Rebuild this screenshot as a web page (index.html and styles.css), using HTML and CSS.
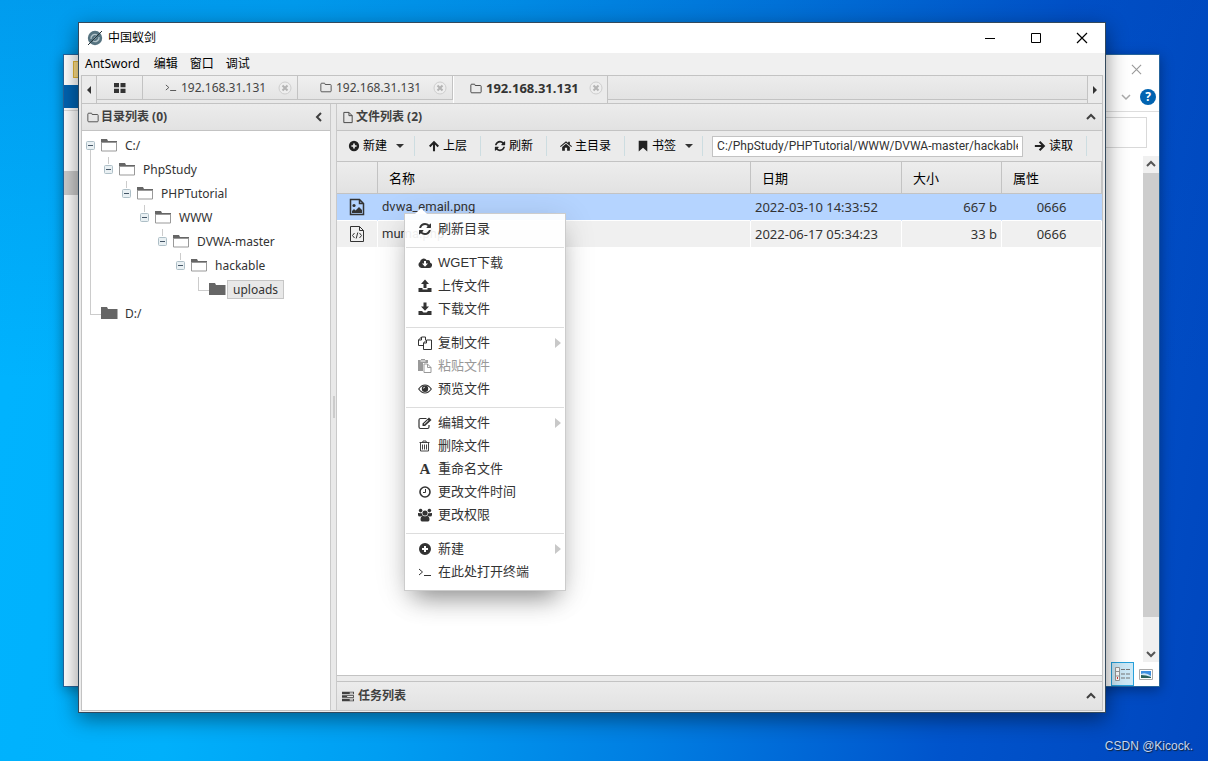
FILE: index.html
```html
<!DOCTYPE html>
<html lang="zh-CN">
<head>
<meta charset="utf-8">
<title>中国蚁剑</title>
<link rel="stylesheet" href="styles.css">
</head>
<body>
<svg class="defs" aria-hidden="true">
  <symbol id="refresh" viewBox="0 0 1792 1792"><path d="M1639 1056q0 5-1 7-64 268-268 434.500t-478 166.500q-146 0-282.500-55t-243.500-157l-129 129q-19 19-45 19t-45-19-19-45v-448q0-26 19-45t45-19h448q26 0 45 19t19 45-19 45l-137 137q71 66 161 102t187 36q134 0 250-65t186-179q11-17 53-117 8-23 30-23h192q13 0 22.500 9.500t9.500 22.500zm25-800v448q0 26-19 45t-45 19h-448q-26 0-45-19t-19-45 19-45l138-138q-148-137-349-137-134 0-250 65t-186 179q-11 17-53 117-8 23-30 23h-199q-13 0-22.500-9.500t-9.500-22.500v-7q65-268 270-434.500t480-166.500q146 0 284 55.500t245 156.500l130-129q19-19 45-19t45 19 19 45z"/></symbol>
  <symbol id="plus" viewBox="0 0 14 14"><path fill-rule="evenodd" d="M7 1a6 6 0 1 0 0 12A6 6 0 0 0 7 1zM6 4h2v2h2v2H8v2H6V8H4V6h2z"/></symbol>
  <symbol id="up" viewBox="0 0 14 14"><path d="M7 13V3M2 7.500 7 2.500l5 5" fill="none" stroke="currentColor" stroke-width="2.400"/></symbol>
  <symbol id="right" viewBox="0 0 14 14"><path d="M1 7h10M6.500 2l5 5-5 5" fill="none" stroke="currentColor" stroke-width="2.400"/></symbol>
  <symbol id="home" viewBox="0 0 14 14"><path d="M7 4.500 11.500 8.200V12.500H8.300V9H5.700v3.500H2.500V8.200zM7 1.500l2.500 2V2h2v3.200L14 7.300l-.8.900L7 3.100.8 8.200 0 7.300z"/></symbol>
  <symbol id="bookmark" viewBox="0 0 14 14"><path d="M2 1h10v12.500L7 9l-5 4.500z"/></symbol>
  <symbol id="folder" viewBox="0 0 14 12"><path d="M1 2q0-1 1-1h3q1 0 1 1.500h6q1 0 1 1V10q0 1-1 1H2q-1 0-1-1z" fill="none" stroke="currentColor"/></symbol>
  <symbol id="file" viewBox="0 0 12 14"><path d="M1.500 1.500h5.500l3.500 3.500v7.500h-9zM7 1.500V5h3.500" fill="none" stroke="currentColor"/></symbol>
  <symbol id="term" viewBox="0 0 14 12"><path d="M1 3l3.500 3L1 9M6 9.500h7" fill="none" stroke="currentColor"/></symbol>
  <symbol id="tasks" viewBox="0 0 14 12"><path fill-rule="evenodd" d="M0 .5h14v3H0zM0 4.500h14v3H0zm6 .8v1.400h7V5.300zM0 8.500h14v3H0zm9 .8v1.400h4V9.300zM9 1.300v1.400h4V1.300z"/></symbol>
  <symbol id="cloud" viewBox="0 0 14 14"><path fill-rule="evenodd" d="M3.500 12A3.200 3.200 0 0 1 2 6.100 3.700 3.700 0 0 1 8.800 4.200 2.200 2.200 0 0 1 12 6.500 2.800 2.800 0 0 1 11.300 12zM6 5v2.500H4l3 3.200 3-3.200H8V5z"/></symbol>
  <symbol id="upload" viewBox="0 0 14 14"><path d="M7 .5 11 5H8.500v4h-3V5H3zM.5 9h4v1.500h5V9h4v4H.5z"/></symbol>
  <symbol id="download" viewBox="0 0 14 14"><path d="M7 8.800 3 4.500h2.500V.5h3v4H11zM.5 9H4l1.500 1.500h3L10 9h3.500v4H.5z"/></symbol>
  <symbol id="copy" viewBox="0 0 14 14"><path d="M5.500 9.500h-5V4l3-3h4v3M3.500 1v3h-3M5.500 13.500V7l3-3h5v9.500zM8.500 4v3h-3" fill="none" stroke="currentColor"/></symbol>
  <symbol id="paste" viewBox="0 0 14 14"><path fill-rule="evenodd" d="M0 1h3V0h4v1h3v3H5v8H0zM2.500 1.500v1h5v-1z"/><path d="M6 5h3.500L13 8.500v5H6zM9.500 5v3.500H13" fill="none" stroke="currentColor"/></symbol>
  <symbol id="eye" viewBox="0 0 14 14"><path d="M.7 7Q3.500 3 7 3t6.300 4Q10.500 11 7 11T.7 7z" fill="none" stroke="currentColor" stroke-width="1.200"/><path fill-rule="evenodd" d="M7 3.500a3.200 3.200 0 1 0 0 6.400 3.200 3.200 0 0 0 0-6.400zM5 6.500A2 2 0 0 1 7 4.700v.8q-1 0-1.200 1z"/></symbol>
  <symbol id="edit" viewBox="0 0 14 14"><path d="M8.500 2.500H2.500q-1.500 0-1.500 1.500v7q0 1.500 1.500 1.500h7q1.500 0 1.500-1.500V9" fill="none" stroke="currentColor" stroke-width="1.200"/><path fill-rule="evenodd" d="M4.500 10V7.500l6.500-6L13.500 4 7 10zM6 7.800v1l4.500-4.300-.6-.6z"/></symbol>
  <symbol id="trash" viewBox="0 0 14 14"><path d="M1.500 3.500h10M4.500 3.500l.5-1.500h3l.5 1.500M2.500 3.500v8.500h8V3.500M4.500 5.500v5M6.500 5.500v5M8.500 5.500v5" fill="none" stroke="currentColor" stroke-width=".9"/></symbol>
  <symbol id="clock" viewBox="0 0 14 14"><path d="M12 7A5 5 0 1 1 2 7a5 5 0 0 1 10 0z" fill="none" stroke="currentColor" stroke-width="1.600"/><path d="M7.500 4v3.500H5" fill="none" stroke="currentColor"/></symbol>
  <symbol id="users" viewBox="0 0 14 14"><circle cx="7" cy="5" r="2.600"/><circle cx="2.600" cy="2.600" r="1.800"/><circle cx="11.400" cy="2.600" r="1.800"/><path d="M0 5q2 0 3.800.2Q4 7 5 7.500 3 8.500 2 8.500 0 8.500 0 7zM14 5q-2 0-3.800.2Q10 7 9 7.500q2 1 3 1 2 0 2-1.500zM5 7.800q2 1 4 0 2.500.4 2.500 3.800 0 1.900-1.500 1.900H4q-1.500 0-1.500-1.900Q2.500 8.200 5 7.800z"/></symbol>
  <symbol id="grid" viewBox="0 0 12 10"><path d="M0 0h5v4.300H0zM6.500 0h5v4.300h-5zM0 5.700h5V10H0zM6.500 5.700h5V10h-5z"/></symbol>
  <symbol id="closetab" viewBox="0 0 14 14"><circle cx="7" cy="7" r="6" fill="#eee" stroke="#cecece"/><path d="M4.500 4.500l5 5M9.500 4.500l-5 5" stroke="#b4b4b4" stroke-width="2"/></symbol>
  <symbol id="chevup" viewBox="0 0 10 8"><path d="M1 6l4-4 4 4" fill="none" stroke="currentColor" stroke-width="2"/></symbol>
  <symbol id="cross" viewBox="0 0 12 12"><path d="M1 1l10 10M11 1L1 11" fill="none" stroke="currentColor" stroke-width="1.200"/></symbol>
  <symbol id="open" viewBox="0 0 17 14"><path d="M0 1h6l1 2h9v2H0z" fill="#666"/><path d="M.5 4.500h15v8.500H.5z" fill="#fff" stroke="#999"/><path d="M1 3.500h15" stroke="#666"/></symbol>
  <symbol id="closed" viewBox="0 0 17 14"><path d="M0 1h6l1 2h9.500v10H0z" fill="#666"/></symbol>
  <symbol id="minus" viewBox="0 0 9 9"><rect x=".5" y=".5" width="8" height="8" rx="1" fill="#e9f0f3" stroke="#aebfc7"/><path d="M2 4.500h5" stroke="#456"/></symbol>
</svg>

<section class="explorer" aria-label="资源管理器">
  <div class="ex-left"><i class="ex-folder"></i><i class="ex-file"></i><i class="ex-line"></i><i class="ex-nav"></i></div>
  <div class="ex-right">
    <div class="ex-title"><button class="plain" aria-label="关闭窗口"><svg width="11" height="11"><use href="#cross"/></svg></button></div>
    <div class="ex-help">
      <svg width="10" height="8" viewBox="0 0 10 8"><path d="M1 2l4 4 4-4" fill="none" stroke="#aaa" stroke-width="1.500"/></svg>
      <button class="help" aria-label="帮助">?</button>
    </div>
    <div class="ex-search"><div class="ex-box"></div></div>
    <div class="ex-scroll">
      <svg width="16" height="17" viewBox="0 0 16 17"><path d="M4 10l4-4 4 4" fill="none" stroke="#555" stroke-width="2"/></svg>
      <i class="thumb"></i>
      <svg width="16" height="17" viewBox="0 0 16 17"><path d="M4 7l4 4 4-4" fill="none" stroke="#555" stroke-width="2"/></svg>
    </div>
    <div class="ex-status">
      <button class="view on" aria-label="详细信息"><svg width="18" height="14" viewBox="0 0 18 14"><path d="M1.500.5h4v13h-4zM1.500 4.500h4M1.500 9h4" fill="#fff" stroke="#999"/><path d="M3 11h1" stroke="#d33" stroke-width="2"/><path d="M7 2.500h4M12 2.500h4M7 7h4M12 7h4M7 11h4M12 11h4" stroke="#777"/></svg></button>
      <button class="view" aria-label="缩略图"><svg width="14" height="11" viewBox="0 0 14 11"><path d="M.5.5h13v10H.5z" fill="#fff" stroke="#aaa"/><path d="M2 2h10v7H2z" fill="#3d8fe0"/><path d="M2 5q5-2 10 2v2H2z" fill="#cfe6f6"/><path d="M2 6q5 0 10 2v1H2z" fill="#28605a"/></svg></button>
    </div>
  </div>
</section>

<main class="window">
  <header class="titlebar">
    <svg class="logo" viewBox="0 0 16 16"><circle cx="8" cy="8" r="7.200" fill="#567380"/><path d="M4 9a4 4 0 0 1 6-4M12 7a4 4 0 0 1-6 4M7 9l2-2" fill="none" stroke="#b4c4ca" stroke-width="1.300"/><path d="M1 15L15 1" stroke="#26343b"/></svg>
    <h1>中国蚁剑</h1>
    <button class="plain wbtn" aria-label="最小化"><svg width="12" height="12"><path d="M1 6.500h10" stroke="#000"/></svg></button>
    <button class="plain wbtn" aria-label="最大化"><svg width="12" height="12"><path d="M1.500 1.500h9v9h-9z" fill="none" stroke="#000"/></svg></button>
    <button class="plain wbtn" aria-label="关闭"><svg width="12" height="12"><use href="#cross"/></svg></button>
  </header>
  <nav class="menubar"><button class="plain">AntSword</button><button class="plain">编辑</button><button class="plain">窗口</button><button class="plain">调试</button></nav>

  <div class="client">
    <div class="tabs">
      <button class="arrow" aria-label="向左"><svg width="4" height="8"><path d="M4 0v8L0 4z"/></svg></button>
      <div class="tab first"><button class="plain" aria-label="主页"><svg width="12" height="10"><use href="#grid"/></svg></button></div>
      <div class="tab"><button class="plain"><svg width="12" height="11"><use href="#term"/></svg>192.168.31.131</button><button class="plain x" aria-label="关闭标签"><svg width="14" height="14"><use href="#closetab"/></svg></button></div>
      <div class="tab"><button class="plain"><svg width="12" height="11"><use href="#folder"/></svg>192.168.31.131</button><button class="plain x" aria-label="关闭标签"><svg width="14" height="14"><use href="#closetab"/></svg></button></div>
      <div class="tab active"><button class="plain"><svg width="12" height="11"><use href="#folder"/></svg>192.168.31.131</button><button class="plain x" aria-label="关闭标签"><svg width="14" height="14"><use href="#closetab"/></svg></button></div>
      <div class="tabfill"></div>
      <button class="arrow end" aria-label="向右"><svg width="4" height="8"><path d="M0 0v8l4-4z"/></svg></button>
    </div>

    <div class="panes">
      <aside class="left">
        <h2 class="head"><svg width="12" height="11"><use href="#folder"/></svg><span>目录列表 (0)</span><button class="plain" aria-label="折叠"><svg width="8" height="10" viewBox="0 0 8 10"><path d="M6 1L2 5l4 4" fill="none" stroke="currentColor" stroke-width="2"/></svg></button></h2>
        <ul class="tree">
          <li class="root"><div class="node"><svg class="tg"><use href="#minus"/></svg><svg class="fo"><use href="#open"/></svg><span>C:/</span></div>
            <ul><li><div class="node"><svg class="tg"><use href="#minus"/></svg><svg class="fo"><use href="#open"/></svg><span>PhpStudy</span></div>
              <ul><li><div class="node"><svg class="tg"><use href="#minus"/></svg><svg class="fo"><use href="#open"/></svg><span>PHPTutorial</span></div>
                <ul><li><div class="node"><svg class="tg"><use href="#minus"/></svg><svg class="fo"><use href="#open"/></svg><span>WWW</span></div>
                  <ul><li><div class="node"><svg class="tg"><use href="#minus"/></svg><svg class="fo"><use href="#open"/></svg><span>DVWA-master</span></div>
                    <ul><li><div class="node"><svg class="tg"><use href="#minus"/></svg><svg class="fo"><use href="#open"/></svg><span>hackable</span></div>
                      <ul><li class="leaf"><div class="node"><i class="tg"></i><svg class="fo"><use href="#closed"/></svg><span class="sel">uploads</span></div></li></ul>
                    </li></ul>
                  </li></ul>
                </li></ul>
              </li></ul>
            </li></ul>
          </li>
          <li class="leaf"><div class="node"><i class="tg"></i><svg class="fo"><use href="#closed"/></svg><span>D:/</span></div></li>
        </ul>
      </aside>
      <div class="split"></div>
      <section class="right">
        <div class="files">
          <h2 class="head"><svg width="12" height="13"><use href="#file"/></svg><span>文件列表 (2)</span><button class="plain" aria-label="折叠"><svg width="10" height="8"><use href="#chevup"/></svg></button></h2>
          <div class="toolbar">
            <button class="tool"><svg><use href="#plus"/></svg>新建<i class="caret"></i></button>
            <button class="tool"><svg><use href="#up"/></svg>上层</button>
            <button class="tool"><svg><use href="#refresh"/></svg>刷新</button>
            <button class="tool"><svg><use href="#home"/></svg>主目录</button>
            <button class="tool"><svg><use href="#bookmark"/></svg>书签<i class="caret"></i></button>
            <input class="path" type="text" aria-label="路径" value="C:/PhpStudy/PHPTutorial/WWW/DVWA-master/hackable/uploads/">
            <button class="tool"><svg><use href="#right"/></svg>读取</button>
          </div>
          <table class="grid">
            <colgroup><col class="c1"><col><col class="c3"><col class="c4"><col class="c5"></colgroup>
            <thead><tr><th></th><th>名称</th><th>日期</th><th>大小</th><th>属性</th></tr></thead>
            <tbody>
              <tr class="picked"><td><svg width="16" height="18" viewBox="0 0 16 18"><path d="M1.500 1.500h9l4 4v11h-13zM10.500 1.500v4h4" fill="none" stroke="currentColor" stroke-width="1.500"/><circle cx="5" cy="7.500" r="1.600"/><path d="M3 15v-2l2-2 1.500 1.500L10 9l3 3v3z"/></svg></td><td class="name">dvwa_email.png</td><td>2022-03-10 14:33:52</td><td>667 b</td><td>0666</td></tr>
              <tr><td><svg width="16" height="18" viewBox="0 0 16 18"><path d="M1.500 1.500h9l4 4v11h-13zM10.500 1.500v4h4M5.500 8L3.500 10.500l2 2.500M10.500 8l2 2.500-2 2.500M8.800 7.500l-1.600 6" fill="none" stroke="currentColor"/></svg></td><td class="name">muma.php</td><td>2022-06-17 05:34:23</td><td>33 b</td><td>0666</td></tr>
            </tbody>
          </table>
        </div>
        <h2 class="head tasks"><svg width="12" height="11"><use href="#tasks"/></svg><span>任务列表</span><button class="plain" aria-label="展开"><svg width="10" height="8"><use href="#chevup"/></svg></button></h2>
      </section>
    </div>
  </div>
</main>

<div class="menu" role="menu">
  <button role="menuitem"><svg><use href="#refresh"/></svg>刷新目录</button>
  <hr>
  <button role="menuitem"><svg><use href="#cloud"/></svg>WGET下载</button>
  <button role="menuitem"><svg><use href="#upload"/></svg>上传文件</button>
  <button role="menuitem"><svg><use href="#download"/></svg>下载文件</button>
  <hr>
  <button role="menuitem" class="sub"><svg><use href="#copy"/></svg>复制文件</button>
  <button role="menuitem" disabled><svg><use href="#paste"/></svg>粘贴文件</button>
  <button role="menuitem"><svg><use href="#eye"/></svg>预览文件</button>
  <hr>
  <button role="menuitem" class="sub"><svg><use href="#edit"/></svg>编辑文件</button>
  <button role="menuitem"><svg><use href="#trash"/></svg>删除文件</button>
  <button role="menuitem"><b class="letter">A</b>重命名文件</button>
  <button role="menuitem"><svg><use href="#clock"/></svg>更改文件时间</button>
  <button role="menuitem"><svg><use href="#users"/></svg>更改权限</button>
  <hr>
  <button role="menuitem" class="sub"><svg><use href="#plus"/></svg>新建</button>
  <button role="menuitem"><svg><use href="#term"/></svg>在此处打开终端</button>
</div>
<div class="credit">CSDN @Kicock.</div>
</body>
</html>
```
FILE: styles.css
```css
* { box-sizing: border-box; }
html, body { height: 100%; }
body {
  margin: 0;
  position: relative;
  overflow: hidden;
  font: 12px/16px "Noto Sans", "Noto Sans CJK SC", sans-serif;
  color: #333;
  background:
    linear-gradient(to bottom, rgba(0, 60, 170, .2), rgba(0, 60, 170, 0) 50%),
    linear-gradient(100deg, #00b4ff 0%, #00b0fb 22%, #009ef2 38%, #007ee2 58%, #0054cc 80%, #0046be 100%);
}
.defs { position: absolute; width: 0; height: 0; }
svg { display: block; flex: none; fill: currentColor; }
ul { list-style: none; margin: 0; padding: 0; }
button { font: inherit; color: inherit; cursor: default; }
.plain { display: flex; align-items: center; border: 0; padding: 0; background: none; }

/* Explorer window behind */
.explorer {
  position: absolute;
  inset: 54px 48px 74px 63px;
  display: flex;
  justify-content: space-between;
  background: #fff;
  border: 1px solid #26649c;
  box-shadow: 0 3px 12px rgba(0, 0, 0, .35);
}
.ex-left { width: 15px; display: flex; flex-direction: column; align-items: flex-end; }
.ex-folder { width: 6px; height: 17px; margin: 6px 0 7px; background: #ffe08a; border: 1px solid #e5b93a; }
.ex-file { width: 15px; height: 23px; background: #0063b1; }
.ex-line { width: 15px; height: 61px; margin-top: 2px; border-top: 1px solid #ddd; }
.ex-nav { width: 15px; height: 24px; background: #ccc; }
.ex-right { width: 55px; display: flex; flex-direction: column; }
.ex-title { height: 28px; display: flex; align-items: center; justify-content: flex-end; padding-right: 17px; color: #999; }
.ex-help { height: 29px; display: flex; align-items: center; justify-content: flex-end; gap: 9px; padding-right: 3px; border-bottom: 1px solid #ddd; }
.help { width: 16px; height: 16px; padding: 0; border: 0; border-radius: 50%; background: #0063b1; color: #fff; font-weight: bold; line-height: 16px; }
.ex-search { height: 44px; padding: 5px 12px 8px 0; }
.ex-box { height: 31px; border: 1px solid #d9d9d9; }
.ex-scroll { flex: 1; width: 16px; align-self: flex-end; display: flex; flex-direction: column; background: #f0f0f0; }
.thumb { flex: 1; background: #cdcdcd; margin-bottom: 28px; }
.ex-status { height: 24px; display: flex; align-items: stretch; padding-left: 7px; }
.view { width: 23px; padding: 0; border: 1px solid transparent; background: none; display: flex; align-items: center; justify-content: center; }
.view.on { background: #cce8f6; border-color: #26a0da; }

/* Main window */
.window {
  position: absolute;
  inset: 22px 102px 48px 78px;
  display: flex;
  flex-direction: column;
  background: #ececec;
  border: 1px solid #33495c;
  box-shadow: 0 6px 20px rgba(0, 0, 0, .45);
}
.titlebar { height: 30px; display: flex; align-items: center; background: #fff; color: #000; padding-left: 8px; }
.logo { width: 16px; height: 16px; margin-right: 5px; }
h1 { margin: 0; flex: 1; font-size: 12px; font-weight: 400; }
.wbtn { width: 46px; height: 30px; justify-content: center; }
.menubar { height: 22px; display: flex; gap: 12px; padding-left: 6px; background: #f0f0f0; color: #000; }
.menubar .plain:first-child { margin-right: 2px; }
.client { flex: 1; min-height: 0; margin: 0 2px 1px; display: flex; flex-direction: column; border: 1px solid #c3c3c3; }

.tabs { height: 28px; display: flex; align-items: flex-start; border-bottom: 1px solid #c3c3c3; background: #e9e9e9; }
.arrow { width: 15px; height: 27px; padding: 0; border: 0; border-right: 1px solid #c3c3c3; background: #ebebeb; display: flex; align-items: center; justify-content: center; }
.arrow.end { border-right: 0; border-left: 1px solid #c3c3c3; }
.tab { width: 155px; height: 24px; padding: 0 5px 0 22px; display: flex; align-items: center; justify-content: space-between; border-right: 1px solid #c3c3c3; border-bottom: 1px solid #c3c3c3; background: linear-gradient(#f0f0f0, #e4e4e4); color: #444; }
.tab .plain { gap: 4px; }
.tab.first { width: 46px; padding: 0; justify-content: center; color: #333; }
.tab.active { height: 27px; padding: 0 4px 3px 16px; border-bottom: 0; background: #ebebeb; font-size: 13px; font-weight: bold; color: #333; border-left: 1px solid #fff; }
.tabfill { flex: 1; height: 24px; border-bottom: 1px solid #c3c3c3; background: linear-gradient(#ececec, #e3e3e3); }

.panes { flex: 1; min-height: 0; display: flex; }
.left { width: 248px; display: flex; flex-direction: column; background: #fff; }
.split { width: 7px; background: #e9e9e9 linear-gradient(#ccc, #ccc) center / 2px 22px no-repeat; border: 1px solid #c9c9c9; border-width: 0 1px; }
.right { flex: 1; min-width: 0; display: flex; flex-direction: column; gap: 5px; background: #ebebeb; }
.files { flex: 1; min-height: 0; background: #fff; border-bottom: 1px solid #c3c3c3; }
.head { height: 27px; margin: 0; padding: 0 6px 0 5px; display: flex; align-items: center; gap: 2px; font-size: 12px; font-weight: bold; background: linear-gradient(#ececec, #e2e2e2); border-bottom: 1px solid #c3c3c3; color: #404040; }
.left .head { padding-right: 7px; }
.head span { flex: 1; }
.tasks { height: 29px; border-top: 1px solid #c3c3c3; border-bottom: 0; gap: 4px; }

.tree { padding: 2px 4px; color: #333; }
.tree li { position: relative; }
.tree ul { margin-left: 18px; }
.node { height: 24px; display: flex; align-items: center; }
.tg { width: 9px; height: 9px; margin-right: 6px; }
.fo { width: 17px; height: 14px; margin-right: 1px; }
.node span { padding: 0 5px; border: 1px solid transparent; line-height: 17px; }
.node .sel { background: #e8e8e8; border-color: #c6c6c6; }
.tree li::before { content: ""; position: absolute; left: 4px; top: 0; width: 1px; height: 7px; background: #ccc; }
.tree .root::before { top: 17px; height: auto; bottom: 0; }
.tree .leaf::before { width: 10px; height: 13px; background: none; border: 1px solid #ccc; border-width: 0 0 1px 1px; }

.toolbar { height: 31px; display: flex; align-items: center; background: #ebebeb; border-bottom: 1px solid #c3c3c3; color: #000; }
.tool { height: 20px; display: flex; align-items: center; gap: 3px; padding: 0 13px; border: 0; border-right: 1px solid #cddde1; background: none; white-space: nowrap; }
.tool:first-child { padding: 0 10px 0 11px; }
.tool:nth-child(5) { padding: 0 9px 0 12px; }
.tool svg { width: 12px; height: 12px; color: #222; }
.caret { margin-left: 6px; border: 4px solid transparent; border-top-color: #333; border-bottom: 0; }
.path { flex: 1; min-width: 0; height: 21px; margin-left: 9px; margin-right: -2px; padding: 0 4px; border: 1px solid #c3c3c3; background: #fff; font: 12px/16px Roboto, sans-serif; color: #333; }
.toolbar .tool:last-child { margin-right: 15px; }

.grid { width: 100%; table-layout: fixed; border-collapse: separate; border-spacing: 0; font-size: 13px; }
.c1 { width: 41px; }
.c3 { width: 151px; }
.c4 { width: 100px; }
.c5 { width: 100px; }
th { height: 32px; padding: 0 11px; text-align: left; font-size: 13px; font-weight: 400; color: #000; background: linear-gradient(#ededed, #e2e2e2); border-right: 1px solid #c3c3c3; border-bottom: 1px solid #c3c3c3; }
td { height: 27px; padding: 0 4px; background: #f0f0f0; border-right: 1px solid #fff; border-bottom: 1px solid #fff; line-height: 20px; }
.picked td { background: #b5d4ff; border-right-color: #b5d4ff; }
td.name { font-family: Roboto, sans-serif; }
td svg { margin: 0 auto; }
td:nth-child(4) { text-align: right; }
td:nth-child(5) { text-align: center; }

/* Context menu */
.menu {
  position: absolute;
  left: 404px;
  top: 213px;
  width: 162px;
  padding: 3px 1px 7px;
  background: rgba(255, 255, 255, .92);
  border: 1px solid #ccc;
  box-shadow: 0 16px 24px -10px rgba(0, 0, 0, .4), 0 4px 30px rgba(0, 0, 0, .12);
  font: 13px/18px "Liberation Sans", "Noto Sans CJK SC", sans-serif;
}
.menu::before { content: ""; position: absolute; left: 10px; top: -6px; border: 6px solid transparent; border-top: 0; border-bottom-color: #fff; }
.menu button { width: 100%; height: 23px; display: flex; align-items: center; gap: 6px; padding: 0 3px 0 12px; border: 0; background: none; color: #333; }
.menu button:disabled { color: #999; }
.menu svg { width: 14px; height: 14px; }
.menu hr { margin: 7px 0 3px; border: 0; border-top: 1px solid #ddd; }
.menu .sub::after { content: ""; margin-left: auto; border: 5px solid transparent; border-left: 6px solid #c8c8c8; border-right: 0; }
.letter { width: 14px; text-align: center; font-family: "Liberation Serif", serif; font-size: 15px; }

.credit { position: absolute; right: 15px; bottom: 7px; font: 12px/16px "Liberation Sans", sans-serif; color: #c6d5ee; text-shadow: 1px 1px 1px #123; }
```
